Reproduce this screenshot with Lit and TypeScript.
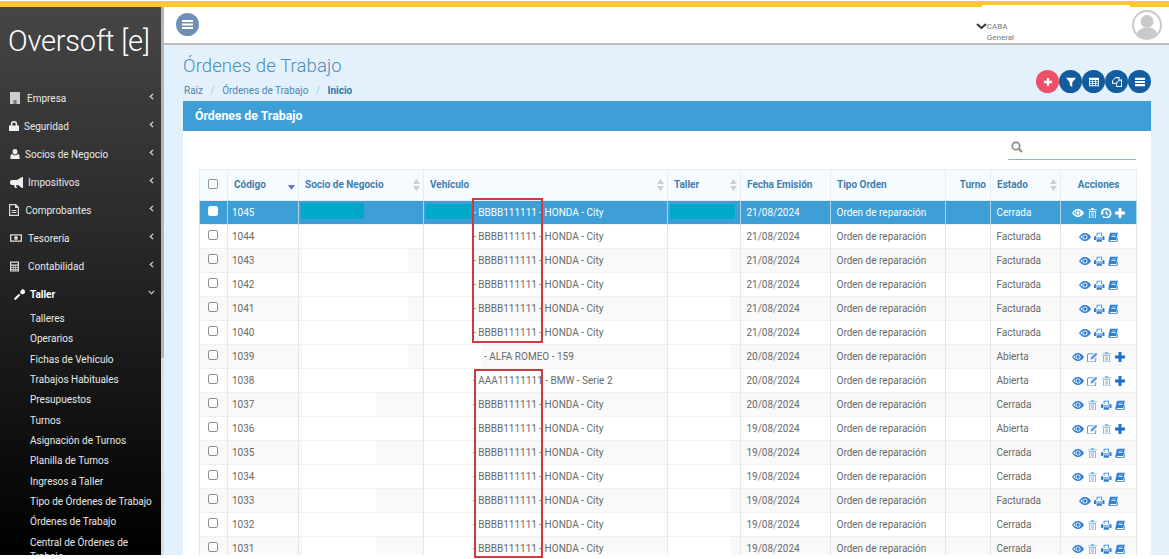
import { LitElement, html, css, svg } from "lit";
import { customElement } from "lit/decorators.js";

const I: Record<string, any> = {
  eye: svg`<svg class="ic eye" viewBox="0 0 24 16"><path fill-rule="evenodd" d="M12 0C6.500 0 2.500 3.500 0 8c2.500 4.500 6.500 8 12 8s9.500-3.500 12-8c-2.500-4.500-6.500-8-12-8zM12 3a5 5 0 1 1 0 10 5 5 0 0 1 0-10zM2.800 8C3.800 6.500 5 5.300 6.500 4.500A7 7 0 0 0 6.500 11.500C5 10.700 3.800 9.500 2.800 8z"/><circle cx="12" cy="8" r="3.300"/></svg>`,
  trash: svg`<svg class="ic trash" viewBox="0 0 14 16"><path fill-rule="evenodd" d="M5 0h4l1 2h4v1.500H0V2h4zM1.500 4.500h11V16h-11zM3 6v8.500h8V6z"/><path d="M4.700 7h1v6.500h-1zM8.300 7h1v6.500h-1zM6.500 7h1v6.500h-1z"/></svg>`,
  print: svg`<svg class="ic" viewBox="0 0 16 16"><path fill-rule="evenodd" d="M4 1h8v5H4zM5.300 2.300v3.700h5.400V2.300z"/><path d="M2 6h1v2.500h10V6h1a2 2 0 0 1 2 2v4h-3v-2H3v2H0V8a2 2 0 0 1 2-2zM4 11h8v4H4z"/></svg>`,
  book: svg`<svg class="ic" viewBox="0 0 15 16"><path fill-rule="evenodd" d="M4 1h10.500l-2.300 11H3.500c-.8 0-1.200.5-1.200 1s.4 1 1.200 1h9.200L14.500 6v7.500L13 15.500H3C1.300 15.500 0 14.500 0 13c0-.5.100-1 .3-1.500L2 3c.2-1.200 1-2 2-2zM5.200 4l-.2 1h6.500l.2-1zM4.700 6.500l-.2 1H11l.2-1z"/></svg>`,
  history: svg`<svg class="ic hist" viewBox="0 0 16 16"><path d="M8 0a8 8 0 1 1-6 13.300l1.800-1.600A5.500 5.500 0 1 0 2.600 7H5L1.500 11-1 7h1.100A8 8 0 0 1 8 0zM7 4h2v3.600l2.400 1.700-1.100 1.600L7 8.600z"/></svg>`,
  edit: svg`<svg class="ic edit" viewBox="0 0 16 16"><path fill-rule="evenodd" d="M3 2h7.500L9 3.500H3A1.500 1.500 0 0 0 1.500 5v8A1.500 1.500 0 0 0 3 14.500h8a1.500 1.500 0 0 0 1.500-1.500V9.500L14 8v5a3 3 0 0 1-3 3H3a3 3 0 0 1-3-3V5a3 3 0 0 1 3-3z"/><path d="M13.500 1 16 3.500 8.500 11 5.500 11.500 6 8.500z"/></svg>`,
  plus: svg`<svg class="ic plus" viewBox="0 0 14 14"><path d="M5 0h4v5h5v4H9v5H5V9H0V5h5z"/></svg>`,
};

const NAV: [string, any, string][] = [
  ["Empresa", svg`<svg class="ni n-a" viewBox="0 0 10 12"><path fill="#ccc" d="M0 0h10v12H0z"/><path fill="#777" d="M3.500 8h3v4h-3z"/></svg>`, "t0"],
  ["Seguridad", svg`<svg class="ni n-b" viewBox="0 0 10 10"><path fill="#eee" fill-rule="evenodd" d="M5 0a3.200 3.200 0 0 1 3.200 3.200V4.500H10V10H0V4.500h1.800V3.200A3.200 3.200 0 0 1 5 0zm0 1.500a1.700 1.700 0 0 0-1.700 1.700v1.300h3.400V3.200A1.700 1.700 0 0 0 5 1.500z"/></svg>`, "t0"],
  ["Socios de Negocio", svg`<svg class="ni n-b" viewBox="0 0 10 11"><path fill="#eee" d="M5 0a2.700 2.700 0 0 1 2.700 3C7.700 4.500 6.800 6 5 6S2.300 4.500 2.300 3A2.700 2.700 0 0 1 5 0zM2 5.500c.7 1 1.700 1.500 3 1.500s2.300-.5 3-1.500c1.300.2 2 1.300 2 3V11H0V8.500c0-1.700.7-2.800 2-3z"/></svg>`, "t1"],
  ["Impositivos", svg`<svg class="ni n-c" viewBox="0 0 13 11"><path fill="#eee" d="M12 0h1v11h-1L8 8H6l1 3H5L4 8H2a2 2 0 0 1-2-2V5a2 2 0 0 1 2-2h5z"/></svg>`, "t0"],
  ["Comprobantes", svg`<svg class="ni n-a" viewBox="0 0 10 12"><path fill="#ddd" fill-rule="evenodd" d="M0 0h7l3 3v9H0zM1.200 1.200v9.600h7.600V4H6V1.200zM2.500 6h5v1h-5zM2.500 8h5v1h-5z"/></svg>`, "tm"],
  ["Tesorería", svg`<svg class="ni n-d" viewBox="0 0 14 9"><path fill="#ddd" fill-rule="evenodd" d="M0 0h14v9H0zM1.500 1.500v6h11v-6zM7 2.300a2.200 2.200 0 1 1 0 4.400 2.200 2.200 0 0 1 0-4.400z"/></svg>`, "t0"],
  ["Contabilidad", svg`<svg class="ni n-c2" viewBox="0 0 11 12"><path fill="#ddd" fill-rule="evenodd" d="M0 0h11v12H0zM1.500 1.500v2h8v-2zM1.500 5v1.500h2V5zM4.500 5v1.500h2V5zM7.500 5v1.500h2V5zM1.500 7.500V9h2V7.500zM4.500 7.500V9h2V7.500zM7.500 7.500V9h2V7.500zM1.500 10v1h2v-1zM4.500 10v1h2v-1zM7.500 10v1h2v-1z"/></svg>`, "t0"],
];
const SUB = ["Talleres", "Operarios", "Fichas de Vehículo", "Trabajos Habituales", "Presupuestos", "Turnos", "Asignación de Turnos", "Planilla de Turnos", "Ingresos a Taller", "Tipo de Órdenes de Trabajo", "Órdenes de Trabajo", "Central de Órdenes de Trabajo"];

type Row = [number, string, string, string, string, string[], number];
const H = "BBBB111111 - HONDA - City";
const ROWS: Row[] = [
  [1045, "- " + H, "21/08/2024", "Cerrada", "sel", ["eye", "trash", "history", "plus"], 63],
  [1044, "- " + H, "21/08/2024", "Facturada", "", ["eye", "print", "book"], 106],
  [1043, "- " + H, "21/08/2024", "Facturada", "", ["eye", "print", "book"], 106],
  [1042, "- " + H, "21/08/2024", "Facturada", "", ["eye", "print", "book"], 106],
  [1041, "- " + H, "21/08/2024", "Facturada", "", ["eye", "print", "book"], 106],
  [1040, "- " + H, "21/08/2024", "Facturada", "", ["eye", "print", "book"], 106],
  [1039, "- ALFA ROMEO - 159", "20/08/2024", "Abierta", "alfa", ["eye", "edit", "trash", "plus"], 106],
  [1038, "- AAA11111111 - BMW - Serie 2", "20/08/2024", "Abierta", "", ["eye", "edit", "trash", "plus"], 106],
  [1037, "- " + H, "20/08/2024", "Cerrada", "", ["eye", "trash", "print", "book"], 74],
  [1036, "- " + H, "19/08/2024", "Abierta", "", ["eye", "edit", "trash", "plus"], 74],
  [1035, "- " + H, "19/08/2024", "Cerrada", "", ["eye", "trash", "print", "book"], 74],
  [1034, "- " + H, "19/08/2024", "Cerrada", "", ["eye", "trash", "print", "book"], 74],
  [1033, "- " + H, "19/08/2024", "Facturada", "", ["eye", "print", "book"], 74],
  [1032, "- " + H, "19/08/2024", "Cerrada", "", ["eye", "trash", "print", "book"], 74],
  [1031, "- " + H, "19/08/2024", "Cerrada", "", ["eye", "trash", "print", "book"], 74],
];

const chevL = svg`<svg class="chev" viewBox="0 0 6 8"><path d="M5 .8 1.500 4 5 7.200" fill="none" stroke="#ddd" stroke-width="1.400"/></svg>`;
const sortIc = svg`<svg class="sort" viewBox="0 0 7 12"><path fill="#c9d0d6" d="M3.500 0 7 5H0zM0 7h7l-3.500 5z"/></svg>`;

@customElement("app-root")
export class AppRoot extends LitElement {
  static styles = css`
    :host { display: block; width: 1169px; height: 559px; overflow: hidden; position: relative; background: #fff; font-family: Roboto, "Liberation Sans", sans-serif; }
    .topbar { height: 6px; border-top: 1px solid #fff; background: #fcc63a; }
    .patch { margin-left: 982px; width: 148px; height: 2px; position: relative; top: 4px; background: #fff; }
    .shell { display: flex; height: 548px; }
    .side { width: 161px; flex: none; background: linear-gradient(#464646, #000); overflow: hidden; color: #e8e8e8; font-size: 10px; }
    .gutter { width: 3px; flex: none; background: linear-gradient(#b5b5b5 0, #b5b5b5 64%, #ddd 64%); }
    .logo { height: 77px; padding: 14px 0 0 8px; box-sizing: border-box; font-size: 29px; font-weight: 300; color: #fff; line-height: 40px; white-space: nowrap; letter-spacing: -.2px; }
    .nav { display: flex; align-items: center; height: 28px; padding-right: 7px; }
    .ni { flex: none; margin-right: 8px; }
    .t1 { padding-left: 1px; }
    .tm { margin-left: -1.500px; }
    .n-a { width: 10px; height: 12px; margin-left: 10px; margin-right: 7px; }
    .n-b { width: 10px; height: 10px; margin-left: 9px; margin-right: 5px; }
    .n-c { width: 13px; height: 11px; margin-left: 10px; margin-right: 5px; }
    .n-c2 { width: 9px; height: 11px; margin-left: 10px; margin-right: 9px; }
    .n-d { width: 12px; height: 8px; margin-left: 10px; margin-right: 6px; }
    .nav span { flex: 1; }
    .chev { width: 5px; height: 7px; position: relative; top: -2px; }
    .taller { font-weight: 700; color: #fff; }
    .wrench { width: 11px; height: 11px; margin-left: 14px; margin-right: 5px; flex: none; }
    .chevd { width: 7px; height: 5px; position: relative; top: -2px; margin-right: -1px; }
    .subs { padding-left: 30px; display: flex; flex-direction: column; padding-top: 1px; }
    .sub { height: 20.350px; line-height: 20.350px; white-space: nowrap; flex: none; }
    .sub.wrap { white-space: normal; line-height: 14px; padding-top: 3px; padding-right: 8px; height: auto; }
    .main { flex: 1; min-width: 0; display: flex; flex-direction: column; background: #e3f1fc; }
    .head { height: 36px; flex: none; background: #fff; border-bottom: 2px solid #bdbdbd; display: flex; align-items: center; padding: 0 7px 0 12px; }
    .burger { width: 23px; height: 23px; border-radius: 50%; background: #6f8fb9; display: flex; align-items: center; justify-content: center; margin-top: -2px; }
    .burger svg { width: 11px; height: 9px; }
    .place { margin-left: auto; display: flex; color: #777; font-size: 8px; line-height: 11px; margin-right: 148px; margin-top: 14px; }
    .place svg { width: 11px; height: 7px; margin-top: 2px; margin-left: -1px; }
    .place small { display: block; font-size: 8px; margin-left: 0; }
    .avatar { width: 30px; height: 30px; flex: none; position: absolute; left: 1132px; top: 10px; }
    .content { flex: 1; min-height: 0; display: flex; flex-direction: column; padding: 0 18px 0 19px; }
    .phead { height: 56px; flex: none; display: flex; justify-content: space-between; }
    h1 { margin: 0; font-size: 18.500px; font-weight: 300; color: #4b8db4; line-height: 24px; padding-top: 9px; letter-spacing: .1px; }
    .crumb { font-size: 10px; color: #4d86ab; display: flex; margin-top: 6px; line-height: 14px; margin-left: 1px; }
    .crumb i { font-style: normal; color: #b8c6d0; margin: 0 7.500px; }
    .crumb b { color: #2f76a6; }
    .btns { display: flex; align-self: flex-end; margin-bottom: 8px; gap: .3px; }
    .b { width: 22.700px; height: 23px; border-radius: 50%; background: #135d9e; display: flex; align-items: center; justify-content: center; }
    .b.red { background: #ef4f69; }
    .b svg { width: 10px; height: 10px; fill: #fff; }
    .b.red svg { width: 8px; height: 8px; }
    .card { flex: 1; min-height: 0; background: #fff; overflow: hidden; }
    .bar { height: 30px; background: #3d9fd6; color: #fff; font-weight: 700; font-size: 12.300px; line-height: 30px; padding-left: 12px; }
    .searchrow { height: 38px; display: flex; justify-content: flex-end; padding-right: 15px; }
    .search { width: 128px; height: 29px; box-sizing: border-box; border-bottom: 1.500px solid #7db8d6; display: flex; align-items: center; padding-left: 3px; }
    .search svg { width: 12px; height: 12px; margin-top: 3px; }
    table { margin-left: 16px; width: 937px; table-layout: fixed; border-collapse: collapse; font-size: 10px; color: #6a6a6a; }
    th { height: 31px; padding: 0 0 2px 6px; box-sizing: border-box; background: #f6fbff; color: #3f7fb0; font-size: 10px; font-weight: 700; text-align: left; border: 1px solid #e8edf1; position: relative; white-space: nowrap; }
    th.c { text-align: center; padding: 0 0 2px; }
    th.r { text-align: right; padding: 0 4px 2px 0; }
    td { height: 24px; padding: 0 0 0 5.500px; box-sizing: border-box; border: 1px solid #eef0f2; border-width: 1px 1px 0 1px; white-space: nowrap; overflow: hidden; border-left-color: #e4e6e8; border-right-color: #e4e6e8; }
    td.code { padding-left: 4px; }
    tbody tr:nth-child(odd) td { background: #f9f9f9; }
    tbody tr.sel td { background: #3d9fd6; color: #fff; border-left-color: #a9d5ee; border-right-color: #a9d5ee; }
    td.mc { padding: 0; }
    .cellf { display: flex; align-items: center; height: 23px; }
    .mask { height: 23px; background: #fff; flex: none; }
    .sel .mask { background: #00a9cc; height: 15px; margin-top: -3px; }
    .m-s { margin-left: 3px; }
    .m-v { margin-left: 0; width: 48px; margin-right: 1px; }
    .alfa .m-v { width: 57px; margin-right: 3px; }
    .sel .m-s { margin-left: 2px; height: 16px; }
    .sel .m-v { margin-left: 2px; width: 46px; margin-right: 1px; }
    .m-t { width: 63px; }
    .sel .m-t { margin-left: 2px; width: 65px; }
    .sort { width: 7px; height: 12px; position: absolute; right: 3.500px; top: 9px; }
    .sortd { width: 7px; height: 5px; position: absolute; right: 3.500px; top: 15px; }
    .cb { display: block; width: 10px; height: 10px; box-sizing: border-box; margin: -3px 0 0 8px; border: 1px solid #8f8f8f; border-radius: 2px; background: #fff; }
    .hcb { margin-top: -1px; }
    .sel .cb { border-color: #fff; }
    .ta { padding: 0; text-align: center; }
    .acts { display: inline-flex; align-items: center; gap: 3px; color: #2f80d5; vertical-align: middle; margin-top: -1px; }
    .sel .acts { color: #fff; }
    .ic { width: 10.500px; height: 10.500px; fill: currentColor; display: block; }
    .ic.eye { width: 12px; height: 8px; }
    .ic.trash { width: 9px; height: 10.500px; opacity: .55; margin: 0 1px; }
    .ic.edit { opacity: .8; }
    .ic.plus { color: #1a70c8; width: 10px; height: 10px; }
    .ic.hist { width: 10.500px; height: 10.500px; }
    .sel .ic { color: #fff; }
    .sel .ic.trash { opacity: .85; }
    .red-a, .red-b { position: absolute; box-sizing: border-box; border: 2px solid #cf3a3f; pointer-events: none; }
    .red-a { left: 472px; top: 198px; width: 71px; height: 145px; }
    .red-b { left: 474px; top: 369px; width: 69px; height: 189px; }
  `;

  render() {
    return html`
      <div class="topbar"><div class="patch"></div></div>
      <div class="shell">
        <aside class="side">
          <div class="logo">Oversoft [e]</div>
          ${NAV.map(([t, ic, c]) => html`<div class="nav ${c}">${ic}<span>${t}</span>${chevL}</div>`)}
          <div class="nav taller">
            <svg class="wrench" viewBox="0 0 12 12"><path fill="#fff" d="M8.500 0A3.500 3.500 0 0 1 12 3.500c0 .3 0 .5-.1.8L9.500 6 7 5V2.500L9 .1C8.800 0 8.700 0 8.500 0zM5.300 5.200l1.500 1.500L2.300 11.500a1.100 1.100 0 0 1-1.700-1.600z"/></svg>
            <span>Taller</span>
            <svg class="chevd" viewBox="0 0 8 6"><path d="M.8 1 4 4.500 7.200 1" fill="none" stroke="#ddd" stroke-width="1.300"/></svg>
          </div>
          <div class="subs">
            ${SUB.map((s, i) => html`<div class="sub ${i === 11 ? "wrap" : ""}">${s}</div>`)}
          </div>
        </aside>
        <div class="gutter"></div>
        <div class="main">
          <header class="head">
            <div class="burger"><svg viewBox="0 0 11 9"><path fill="#fff" d="M0 0h11v2H0zM0 3.500h11v2H0zM0 7h11v2H0z"/></svg></div>
            <div class="place">
              <svg viewBox="0 0 11 7"><path d="M1 1l4.500 4L10 1" fill="none" stroke="#333" stroke-width="2"/></svg>
              <div>CABA<small>General</small></div>
            </div>
            <svg class="avatar" viewBox="0 0 30 30"><circle cx="15" cy="15" r="14" fill="#fff" stroke="#c9c9c9" stroke-width="2"/><circle cx="15" cy="11.500" r="6.500" fill="#c9c9c9"/><path fill="#c9c9c9" d="M5 24c1-5 5-6.500 10-6.500S24 19 25 24a14 14 0 0 1-20 0z"/></svg>
          </header>
          <div class="content">
            <div class="phead">
              <div>
                <h1>Órdenes de Trabajo</h1>
                <div class="crumb"><span>Raíz</span><i>/</i><span>Órdenes de Trabajo</span><i>/</i><b>Inicio</b></div>
              </div>
              <div class="btns">
                <div class="b red">${I.plus}</div>
                <div class="b"><svg viewBox="0 0 12 12"><path d="M0 1h12L7.500 6.500V12l-3-2V6.500z"/></svg></div>
                <div class="b"><svg viewBox="0 0 12 12"><path fill-rule="evenodd" d="M0 1h12v10H0zM1 3.500V5h2.500V3.500zM4.500 3.500V5h3V3.500zM8.500 3.500V5H11V3.500zM1 6v1.500h2.500V6zM4.500 6v1.500h3V6zM8.500 6v1.500H11V6zM1 8.500V10h2.500V8.500zM4.500 8.500V10h3V8.500zM8.500 8.500V10H11V8.500z"/></svg></div>
                <div class="b"><svg viewBox="0 0 12 12"><path fill-rule="evenodd" d="M4.500 0H9v3h3v9H5V8H0V4.500zM4 1.500 1.200 4.300V6.800H5L7.800 4V1.500zM8.700 4.500 6 7.300v3.500h4.800V4.500z"/></svg></div>
                <div class="b"><svg viewBox="0 0 12 12"><path d="M0 1h12v2.500H0zM0 4.800h12v2.500H0zM0 8.500h12V11H0z"/></svg></div>
              </div>
            </div>
            <div class="card">
              <div class="bar">Órdenes de Trabajo</div>
              <div class="searchrow"><div class="search"><svg viewBox="0 0 12 12"><circle cx="5" cy="5" r="3.700" fill="none" stroke="#8a8a8a" stroke-width="1.700"/><path d="M7.800 7.800 11 11" stroke="#8a8a8a" stroke-width="2"/></svg></div></div>
              <table>
                <colgroup>${[28, 71, 125, 244, 73, 90, 115, 45, 70, 76].map((w) => html`<col style="width:${w}px" />`)}</colgroup>
                <thead><tr>
                  <th class="c"><span class="cb hcb"></span></th>
                  <th>Código<svg class="sortd" viewBox="0 0 7 5"><path fill="#6a6fd0" d="M0 0h7L3.500 5z"/></svg></th>
                  <th>Socio de Negocio${sortIc}</th>
                  <th>Vehículo${sortIc}</th>
                  <th>Taller${sortIc}</th>
                  <th>Fecha Emisión</th>
                  <th>Tipo Orden</th>
                  <th class="r">Turno</th>
                  <th>Estado${sortIc}</th>
                  <th class="c">Acciones</th>
                </tr></thead>
                <tbody>
                  ${ROWS.map((r) => html`<tr class="${r[4]}">
                      <td class="mc"><span class="cb"></span></td>
                      <td class="code">${r[0]}</td>
                      <td class="mc"><div class="cellf"><div class="mask m-s" style="width:${r[6]}px"></div></div></td>
                      <td class="mc"><div class="cellf"><div class="mask m-v"></div><span>${r[1]}</span></div></td>
                      <td class="mc"><div class="cellf"><div class="mask m-t"></div></div></td>
                      <td>${r[2]}</td>
                      <td>Orden de reparación</td>
                      <td></td>
                      <td>${r[3]}</td>
                      <td class="ta"><span class="acts">${r[5].map((k) => I[k])}</span></td>
                    </tr>`)}
                </tbody>
              </table>
            </div>
          </div>
        </div>
      </div>
      <div class="red-a"></div>
      <div class="red-b"></div>
    `;
  }
}
